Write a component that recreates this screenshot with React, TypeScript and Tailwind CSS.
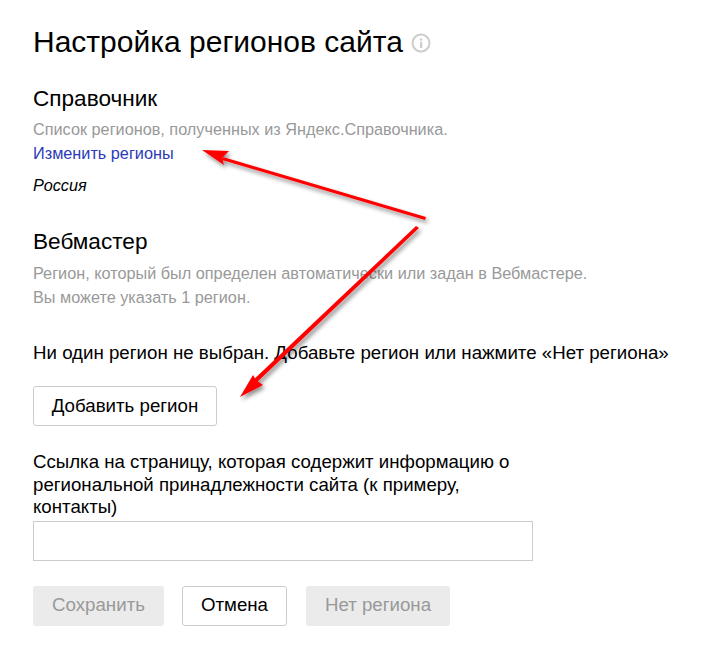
import React from "react";

const grayText = "text-[16.25px] leading-[24px] text-[#999999]";

export default function App() {
    return (
        <div className="relative h-[645px] w-[710px] overflow-hidden bg-white pl-[33px] pt-[24px] font-['Liberation_Sans',Arial,sans-serif] text-black">

            {/* Title */}
            <div className="flex h-[36px] items-center gap-[8px]">
                <h1 className="text-[30px] leading-[36px] font-normal">Настройка регионов сайта</h1>
                <svg width="20" height="20" viewBox="0 0 20 20" className="mt-[2px]">
                    <circle cx="10" cy="10" r="8.5" fill="none" stroke="#cccccc" strokeWidth="2" />
                    <rect x="9" y="9" width="2.2" height="6" fill="#cccccc" />
                    <rect x="9" y="5.4" width="2.2" height="2.2" fill="#cccccc" />
                </svg>
            </div>

            {/* Справочник */}
            <h2 className="mt-[23px] text-[22.6px] leading-[32px] font-normal">Справочник</h2>
            <p className={`mt-[2px] ${grayText}`}>Список регионов, полученных из Яндекс.Справочника.</p>
            <a href="#" className="block text-[16.25px] leading-[24px] text-[#2b3bb8]">Изменить регионы</a>
            <p className="mt-[8px] text-[16.25px] leading-[24px] italic">Россия</p>

            {/* Вебмастер */}
            <h2 className="mt-[29px] text-[22.6px] leading-[32px] font-normal">Вебмастер</h2>
            <p className={`mt-[3px] ${grayText}`}>Регион, который был определен автоматически или задан в Вебмастере.</p>
            <p className={grayText}>Вы можете указать 1 регион.</p>

            <p className="mt-[32px] text-[18.7px] leading-[24px]">Ни один регион не выбран. Добавьте регион или нажмите «Нет региона»</p>

            <button className="mt-[21px] block h-[40px] w-[184px] rounded-[3px] border border-[#cccccc] bg-white text-[18.7px] text-black">
                Добавить регион
            </button>

            <label className="mt-[25px] block w-[500px] text-[18.67px] leading-[22.5px]">
                Ссылка на страницу, которая содержит информацию о региональной принадлежности сайта (к примеру, контакты)
            </label>
            <input className="mt-[2px] block h-[40px] w-[500px] border border-[#cccccc] bg-white" />

            <div className="mt-[25px] flex">
                <button className="h-[40px] w-[131px] rounded-[3px] bg-[#ebebeb] text-[18.7px] text-[#999999]">Сохранить</button>
                <button className="ml-[18px] h-[40px] w-[105px] rounded-[3px] border border-[#cccccc] bg-white text-[18.7px] text-black">Отмена</button>
                <button className="ml-[19px] h-[40px] w-[144px] rounded-[3px] bg-[#ebebeb] text-[18.7px] text-[#999999]">Нет региона</button>
            </div>

            {/* Red arrows drawn over the page */}
            <svg width="710" height="645" viewBox="0 0 710 645" className="pointer-events-none absolute top-0 left-0">
                <defs>
                    <filter id="arrowShadow" x="-20%" y="-20%" width="140%" height="140%">
                        <feDropShadow dx="2" dy="3" stdDeviation="2" floodColor="#000000" floodOpacity="0.45" />
                    </filter>
                </defs>
                <g filter="url(#arrowShadow)" fill="#ff0000">
                    <polygon points="426,217 425,220 222,160 223,157" />
                    <polygon points="202,150 229,151 222,158 224,165" />
                    <polygon points="416,226 419,228 253,386 250,383" />
                    <polygon points="240,397 253,375 256,380 263,385" />
                </g>
            </svg>
        </div>
    );
}
